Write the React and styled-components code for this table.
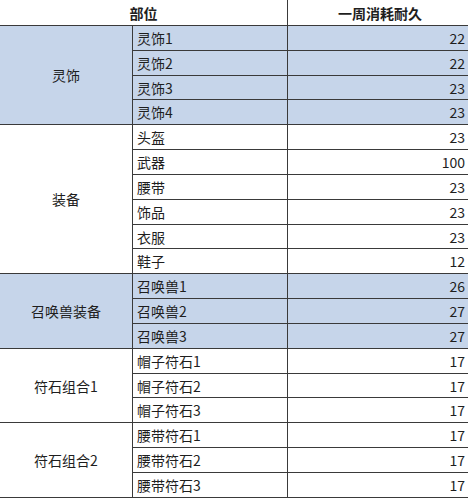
import styled, { createGlobalStyle } from 'styled-components';

const GlobalStyle = createGlobalStyle`
  * {
    margin: 0;
    padding: 0;
    box-sizing: border-box;
  }

  body {
    background: #ffffff;
    font-family: 'Noto Sans CJK SC', 'Noto Sans', sans-serif;
    color: #1e1e1e;
  }
`;

const LINE = '1px solid #3a3a3a';
const ROW = 24.84;

const groups = [
  { name: '灵饰', blue: true, items: [['灵饰1', 22], ['灵饰2', 22], ['灵饰3', 23], ['灵饰4', 23]] },
  { name: '装备', blue: false, items: [['头盔', 23], ['武器', 100], ['腰带', 23], ['饰品', 23], ['衣服', 23], ['鞋子', 12]] },
  { name: '召唤兽装备', blue: true, items: [['召唤兽1', 26], ['召唤兽2', 27], ['召唤兽3', 27]] },
  { name: '符石组合1', blue: false, items: [['帽子符石1', 17], ['帽子符石2', 17], ['帽子符石3', 17]] },
  { name: '符石组合2', blue: false, items: [['腰带符石1', 17], ['腰带符石2', 17], ['腰带符石3', 17]] },
];

const Sheet = styled.div`
  width: 468px;
  display: flex;
  flex-direction: column;
`;

const Header = styled.div`
  display: grid;
  grid-template-columns: 288px 180px;
  height: 26px;
  border-bottom: ${LINE};
`;

const HeadCell = styled.div`
  display: flex;
  align-items: center;
  justify-content: center;
  font-size: 14px;
  font-weight: 700;
  padding-left: ${p => p.$shift || 0}px;
  border-right: ${p => (p.$divider ? LINE : 'none')};
`;

const Group = styled.div`
  display: grid;
  grid-template-columns: 133px 155px 180px;
  grid-auto-rows: ${ROW}px;
  background: ${p => (p.$blue ? '#c6d5ea' : '#ffffff')};
`;

const Label = styled.div`
  grid-column: 1;
  grid-row: 1 / span ${p => p.$span};
  display: flex;
  align-items: center;
  justify-content: center;
  font-size: 14px;
  border-right: ${LINE};
  border-bottom: ${LINE};
`;

const Item = styled.div`
  grid-column: 2;
  display: flex;
  align-items: center;
  padding-left: 4px;
  font-size: 14px;
  border-right: ${LINE};
  border-bottom: ${LINE};
`;

const Value = styled.div`
  grid-column: 3;
  display: flex;
  align-items: center;
  justify-content: flex-end;
  padding-right: 3px;
  font-size: 14px;
  border-bottom: ${LINE};
`;

export default function App() {
  return (
    <>
      <GlobalStyle />
      <Sheet>
        <Header>
          <HeadCell $divider>部位</HeadCell>
          <HeadCell $shift={4}>一周消耗耐久</HeadCell>
        </Header>
        {groups.map(g => (
          <Group key={g.name} $blue={g.blue}>
            <Label $span={g.items.length}>{g.name}</Label>
            {g.items.map(([name, value], i) => [
              <Item key={name} style={{ gridRow: i + 1 }}>{name}</Item>,
              <Value key={name + 'v'} style={{ gridRow: i + 1 }}>{value}</Value>,
            ])}
          </Group>
        ))}
      </Sheet>
    </>
  );
}
